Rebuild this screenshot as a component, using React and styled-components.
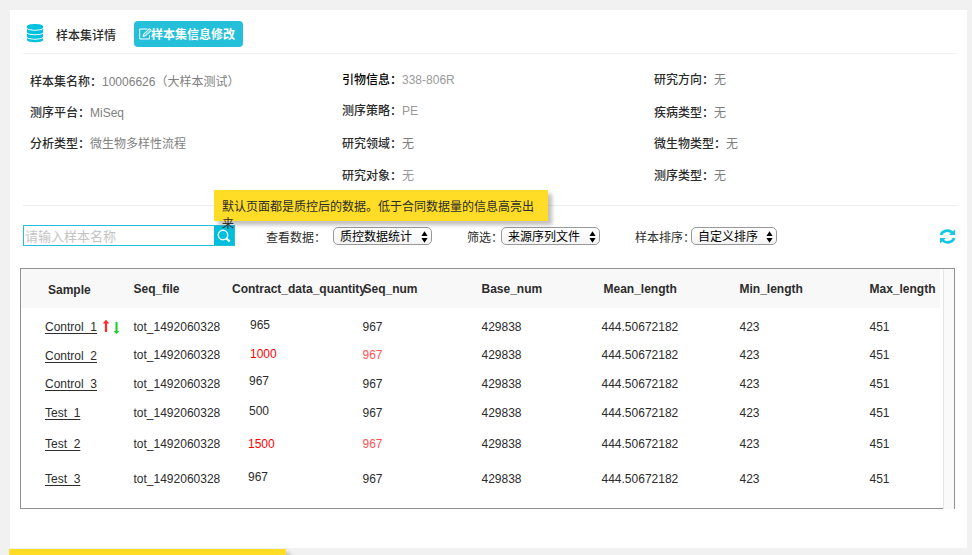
import React from "react";
import styled, { createGlobalStyle } from "styled-components";

const GlobalStyle = createGlobalStyle`
  * { box-sizing: border-box; }
  body {
    margin: 0;
    background: #f1f1f1;
    overflow: hidden;
    font-family: "Liberation Sans", "Noto Sans CJK SC", sans-serif;
    font-size: 12px;
    line-height: 18px;
    color: #2c2c2c;
  }
`;

const Page = styled.div`
  position: relative;
  height: 555px;
  padding: 10px 5px 0 10px;
  overflow: hidden;
`;

const Panel = styled.main`
  height: 538px;
  background: #fff;
`;

const Header = styled.header`
  display: flex;
  align-items: flex-start;
  height: 44px;
  margin: 0 10px 0 13px;
  padding: 11px 0 0 3px;
  border-bottom: 1px solid #f2f2f2;
`;

const Title = styled.h1`
  margin: 6px 18px 0 12px;
  font-size: 12px;
  font-weight: 500;
  line-height: 18px;
  white-space: nowrap;
`;

const EditButton = styled.button`
  display: flex;
  align-items: center;
  width: 109px;
  height: 26px;
  padding: 2px 0 0 5px;
  border: 0;
  border-radius: 4px;
  background: #24c0da;
  color: #fff;
  font: bold 12px/18px "Liberation Sans", "Noto Sans CJK SC", sans-serif;
  white-space: nowrap;
`;

const EditIcon = styled.svg`
  flex: none;
  width: 13px;
  height: 12px;
  margin: -3px -1px 0 0;
`;

const InfoGrid = styled.section`
  display: grid;
  grid-template-columns: 312px 312px 1fr;
  height: 152px;
  margin: 0 9px 0 13px;
  padding-left: 7px;
  border-bottom: 1px solid #eee;
`;

const InfoColumn = styled.dl`
  margin: 0;
`;

const InfoRow = styled.div`
  display: flex;
  height: 18px;
  margin-top: ${(p) => p.$gap}px;
  white-space: nowrap;
`;

const Label = styled.dt`
  font-weight: 500;
  color: ${(p) => (p.$dark ? "#000" : "#2b2b2b")};
`;

const Value = styled.dd`
  margin: 0;
  color: ${(p) => (p.$light ? "#999" : "#808080")};
`;

const Toolbar = styled.div`
  display: flex;
  align-items: flex-start;
  height: 62px;
  padding: 19px 11px 0 13px;
`;

const SearchBox = styled.div`
  display: flex;
  width: 212px;
  height: 21px;
  border: 1px solid #24c0da;
`;

const SearchInput = styled.input`
  width: 190px;
  padding: 3px 0 0 1px;
  border: 0;
  outline: 0;
  font: 13px/16px "Liberation Sans", "Noto Sans CJK SC", sans-serif;
  &::placeholder { color: #c4c4c4; }
`;

const SearchButton = styled.button`
  display: flex;
  align-items: center;
  justify-content: center;
  width: 20px;
  padding: 0;
  border: 0;
  background: #00bfdc;
`;

const FilterLabel = styled.span`
  width: ${(p) => p.$width}px;
  margin: 4px 0 0 ${(p) => p.$gap}px;
  white-space: nowrap;
`;

const SelectBox = styled.button`
  display: flex;
  align-items: center;
  justify-content: space-between;
  flex: none;
  width: ${(p) => p.$width}px;
  height: 18px;
  margin-top: 2px;
  padding: 1px 3px 0 6px;
  border: 1px solid #999;
  border-radius: 5px;
  background: linear-gradient(#fff, #f4f4f4);
  color: #000;
  font: 12px/16px "Liberation Sans", "Noto Sans CJK SC", sans-serif;
  white-space: nowrap;
`;

const Refresh = styled.button`
  display: flex;
  margin: 4px 0 0 auto;
  padding: 0;
  border: 0;
  background: none;
`;

const TableFrame = styled.section`
  display: flex;
  width: 935px;
  height: 241px;
  margin-left: 10px;
  border: solid #919191;
  border-width: 1px 1px 0 1px;
`;

const TableBody = styled.div`
  width: 922px;
  border-bottom: 1px solid #919191;
`;

const ScrollTrack = styled.div`
  flex: 1;
  background: #fafafa;
  border-left: 1px solid #e5e5e5;
`;

const Row = styled.div`
  display: grid;
  grid-template-columns: 88.5px 98.5px 130.5px 119px 120px 138px 130px 70px;
  align-items: start;
  height: ${(p) => p.$height}px;
  padding-left: 24px;
  white-space: nowrap;
`;

const HeadRow = styled(Row)`
  width: 919px;
  margin-bottom: 10px;
  padding-top: 11px;
  background: #f8f8f8;
  font-weight: bold;
`;

const Cell = styled.span`
  margin: ${(p) => p.$top || 0}px 0 0 ${(p) => p.$left || 0}px;
  color: ${(p) => p.$color || "inherit"};
`;

const SampleCell = styled(Cell)`
  display: flex;
`;

const SampleLink = styled.a`
  color: #2c2c2c;
  text-decoration: underline;
  text-decoration-skip-ink: none;
  text-underline-offset: 2px;
`;

const Note = styled.aside`
  position: absolute;
  left: 214px;
  top: 190px;
  width: 334px;
  height: 31px;
  padding: 9px 8px 0;
  background: #ffdc25;
  box-shadow: 4px 4px 4px rgba(0, 0, 0, 0.25);
  line-height: 17px;
`;

const BottomNote = styled.aside`
  position: absolute;
  left: 9px;
  top: 549px;
  width: 277px;
  height: 30px;
  background: #ffdc25;
  box-shadow: 4px 4px 4px rgba(0, 0, 0, 0.25);
`;

const DatabaseIcon = styled.svg`
  margin-top: 2px;
  flex: none;
`;

const SortArrows = styled.svg`
  margin-left: 5px;
`;

const columns = [
  [
    { gap: 19, label: "样本集名称：", value: "10006626（大样本测试）" },
    { gap: 13, label: "测序平台：", value: "MiSeq" },
    { gap: 13, label: "分析类型：", value: "微生物多样性流程" },
  ],
  [
    { gap: 17, label: "引物信息：", value: "338-806R", dark: true, light: true },
    { gap: 13, label: "测序策略：", value: "PE", light: true },
    { gap: 15, label: "研究领域：", value: "无" },
    { gap: 14, label: "研究对象：", value: "无", light: true },
  ],
  [
    { gap: 17, label: "研究方向：", value: "无" },
    { gap: 15, label: "疾病类型：", value: "无" },
    { gap: 13, label: "微生物类型：", value: "无" },
    { gap: 14, label: "测序类型：", value: "无" },
  ],
];

const headings = [
  { text: "Sample", left: 3, top: 1 },
  { text: "Seq_file" },
  { text: "Contract_data_quantity" },
  { text: "Seq_num", left: 1 },
  { text: "Base_num" },
  { text: "Mean_length", left: 2 },
  { text: "Min_length" },
  { text: "Max_length" },
];

const samples = [
  { name: "Control_1", height: 28, quantity: "965", left: 18, top: -2, sorted: true },
  { name: "Control_2", height: 29, quantity: "1000", left: 18, top: -1, low: true, linkTop: 1 },
  { name: "Control_3", height: 29, quantity: "967", left: 17, top: -3 },
  { name: "Test_1", height: 31, quantity: "500", left: 17, top: -2 },
  { name: "Test_2", height: 35, quantity: "1500", left: 16, top: 0, low: true },
  { name: "Test_3", height: 30, quantity: "967", left: 16, top: -2 },
];

function Select({ width, children }) {
  return (
    <SelectBox $width={width}>
      {children}
      <svg width="7" height="12" viewBox="0 0 7 12">
        <path d="M3.5 0.3 6.6 5H.4zM3.5 11.7.4 7h6.2z" fill="#000" />
      </svg>
    </SelectBox>
  );
}

export default function App() {
  return (
    <>
      <GlobalStyle />
      <Page>
        <Panel>
          <Header>
            <DatabaseIcon width="18" height="20" viewBox="0 0 18 20">
              <path
                d="M1 3.2C1 .2 17 .2 17 3.2v1.6c0 2.6-16 2.6-16 0zM1 6c2 2.2 14 2.2 16 0v3.2c0 2.6-16 2.6-16 0zM1 10.5c2 2.2 14 2.2 16 0v3.2c0 2.6-16 2.6-16 0zM1 15c2 2.2 14 2.2 16 0v2c0 3-16 3-16 0z"
                fill="#00c1de"
              />
            </DatabaseIcon>
            <Title>样本集详情</Title>
            <EditButton>
              <EditIcon viewBox="0 0 13 12" fill="none" stroke="#fff">
                <path d="M8.5 1H.7v10h9.8V7" />
                <path d="M4 8.5 4.9 5.8 10.5.6l1.8 1.8-5.6 5.3z" fill="#fff" fillOpacity=".35" />
              </EditIcon>
              样本集信息修改
            </EditButton>
          </Header>

          <InfoGrid>
            {columns.map((rows, i) => (
              <InfoColumn key={i}>
                {rows.map((row) => (
                  <InfoRow key={row.label} $gap={row.gap}>
                    <Label $dark={row.dark}>{row.label}</Label>
                    <Value $light={row.light}>{row.value}</Value>
                  </InfoRow>
                ))}
              </InfoColumn>
            ))}
          </InfoGrid>

          <Toolbar>
            <SearchBox>
              <SearchInput placeholder="请输入样本名称" />
              <SearchButton aria-label="搜索">
                <svg width="14" height="14" viewBox="0 0 14 14" fill="none" stroke="#fff">
                  <circle cx="6" cy="6" r="4.7" strokeWidth="1.4" />
                  <path d="m9.5 9.5 3.2 3" strokeWidth="2.2" />
                </svg>
              </SearchButton>
            </SearchBox>
            <FilterLabel $gap={31} $width={67}>查看数据：</FilterLabel>
            <Select width={99}>质控数据统计</Select>
            <FilterLabel $gap={35} $width={34}>筛选：</FilterLabel>
            <Select width={99}>来源序列文件</Select>
            <FilterLabel $gap={35} $width={56}>样本排序：</FilterLabel>
            <Select width={86}>自定义排序</Select>
            <Refresh aria-label="刷新">
              <svg width="17" height="15" viewBox="0 0 17 15" fill="none" stroke="#14c8e2" strokeWidth="2.7">
                <path d="M2 6C3.2 1.4 10 .4 13.3 3.6M15 9C13.8 13.6 7 14.6 3.7 11.4" />
                <path d="M16 .5v5.6h-6zM1 14.5V8.9h6z" fill="#14c8e2" stroke="none" />
              </svg>
            </Refresh>
          </Toolbar>

          <TableFrame>
            <TableBody>
              <HeadRow $height={39}>
                {headings.map((h) => (
                  <Cell key={h.text} $left={h.left} $top={h.top}>{h.text}</Cell>
                ))}
              </HeadRow>
              {samples.map((s) => (
                <Row key={s.name} $height={s.height}>
                  <SampleCell $top={s.linkTop}>
                    <SampleLink>{s.name}</SampleLink>
                    {s.sorted && (
                      <SortArrows width="18" height="18" viewBox="0 0 18 18" fill="none">
                        <path d="M4 14V4" stroke="#ff2828" strokeWidth="2.2" />
                        <path d="M4 1.8 7.3 5.4H.7z" fill="#ff2828" />
                        <path d="M14.5 4v10" stroke="#10d020" strokeWidth="2" />
                        <path d="m14.5 16-2.8-3h5.6z" fill="#10d020" />
                      </SortArrows>
                    )}
                  </SampleCell>
                  <Cell>tot_1492060328</Cell>
                  <Cell $left={s.left} $top={s.top} $color={s.low && "#f00"}>{s.quantity}</Cell>
                  <Cell $color={s.low && "#ff5252"}>967</Cell>
                  <Cell>429838</Cell>
                  <Cell>444.50672182</Cell>
                  <Cell>423</Cell>
                  <Cell>451</Cell>
                </Row>
              ))}
            </TableBody>
            <ScrollTrack />
          </TableFrame>
        </Panel>
        <Note>默认页面都是质控后的数据。低于合同数据量的信息高亮出来</Note>
        <BottomNote />
      </Page>
    </>
  );
}
